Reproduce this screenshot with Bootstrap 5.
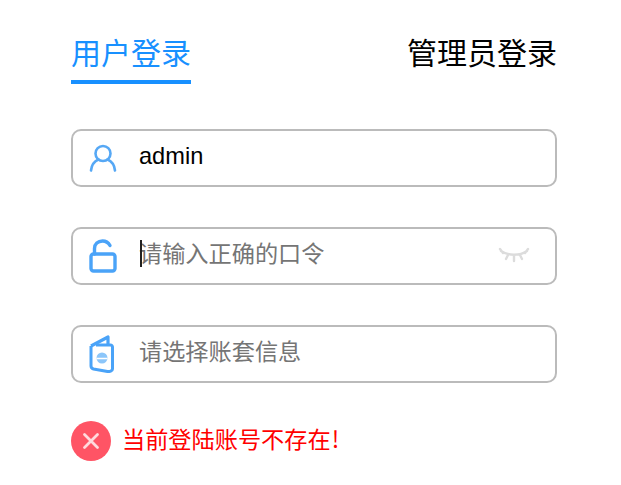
<!DOCTYPE html>
<html lang="zh"><head><meta charset="utf-8">
<link href="https://cdn.jsdelivr.net/npm/bootstrap@5.3.0/dist/css/bootstrap.min.css" rel="stylesheet">
<style>
html,body{height:100%;background:#fff;overflow:hidden}
body{font-family:"Liberation Sans","Noto Sans CJK SC",sans-serif;}
.wrap-login{padding:30px 64px 0 71px}
.tab-item{font-size:30px;line-height:42px;height:54px;padding-top:3px;color:#000;text-decoration:none;display:block}
.tab-item.is-on{color:#1890ff;border-bottom:4px solid #1890ff;width:120px;white-space:nowrap}
.tabs-row{margin-bottom:45px}
.field-box{height:58px;border:2px solid #bbb;border-radius:10px;margin-bottom:40px;position:relative;background:#fff}
.ico-slot{width:66px;flex:none;padding-left:16px}
.field-input{border:0;outline:0;flex:1 1 0;min-width:0;font-size:23.6px;line-height:30px;color:#000;background:transparent;padding:0 0 4px 0;font-family:inherit}
.field-input::placeholder{color:#757575;font-size:23.2px;opacity:1}
.caret-bar{position:absolute;left:67px;top:11px;width:2px;height:27px;background:#222}
.eye-ico{position:absolute;left:425px;top:15px}
.err-row{color:#f00;font-size:23.2px;margin-top:-2px;gap:11px;height:40px}
.err-dot{width:40px;height:40px;border-radius:50%;background:#ff5465;flex:none}
.err-text{line-height:30px;padding-bottom:4px}
.bang-mark{font-family:"Noto Sans CJK SC",sans-serif;margin-left:1px}
</style></head><body>
<div class="wrap-login">
 <div class="d-flex justify-content-between align-items-start tabs-row">
  <a class="tab-item is-on" href="#">用户登录</a>
  <a class="tab-item" href="#">管理员登录</a>
 </div>
 <div class="field-box d-flex align-items-center">
  <div class="ico-slot d-flex align-items-center">
   <svg width="28" height="28" viewBox="0 0 28 28" fill="none" stroke="#56a8f5" stroke-width="2.6"><circle cx="14" cy="9.500" r="7.500"/><path d="M2 26.500c.6-6 4-9.500 7.500-11M26 26.500c-.6-6-4-9.500-7.500-11" stroke-linecap="round"/></svg>
  </div>
  <input class="field-input" value="admin" aria-label="用户名">
 </div>
 <div class="field-box d-flex align-items-center">
  <div class="ico-slot d-flex align-items-center">
   <svg width="28" height="34" viewBox="0 0 28 34" fill="none" stroke="#4aa3f8" stroke-width="3.400"><rect x="2" y="15" width="24" height="17" rx="2.500"/><path d="M5.500 15V9.500C5.500 5 9 2 13.500 2c3.500 0 6 1.800 7.500 4.500" stroke-linecap="round"/></svg>
  </div>
  <input class="field-input" placeholder="请输入正确的口令" aria-label="口令">
  <span class="caret-bar"></span>
  <svg class="eye-ico" width="32" height="22" viewBox="0 0 32 22" fill="none" stroke="#dcdcdc" stroke-width="2.400" stroke-linecap="round"><path d="M3 7c7 5 19 5 26 0M5 9 2 5M27 9l3-4M10 11l-2 4M16 12v5M22 11l2 4"/></svg>
 </div>
 <div class="field-box d-flex align-items-center">
  <div class="ico-slot d-flex align-items-center">
   <svg width="26" height="38" viewBox="0 0 26 38" fill="none" stroke="#4aa3f8" stroke-width="3" stroke-linejoin="round"><path d="M2 11v20c0 1.500 1 2.500 2.500 3l14 2.500c2 .3 5-.5 5-2.500V12c0-1-1-2-2-2H7"/><path d="M2 11 19 2v8" stroke-width="3.200"/><circle cx="13" cy="23" r="5.500" fill="#8cc6fa" stroke="none"/><path d="M7.500 23.500h11" stroke="#fff" stroke-width="1.500"/></svg>
  </div>
  <input class="field-input" placeholder="请选择账套信息" aria-label="账套">
 </div>
 <div class="err-row d-flex align-items-center">
  <span class="err-dot d-flex align-items-center justify-content-center">
   <svg width="18" height="18" viewBox="0 0 18 18" stroke="#ffd9dd" stroke-width="2.800" stroke-linecap="round"><path d="M2.500 2.500l13 13M15.500 2.500l-13 13"/></svg>
  </span>
  <span class="err-text">当前登陆账号不存在<span class="bang-mark">!</span></span>
 </div>
</div>
</body></html>
